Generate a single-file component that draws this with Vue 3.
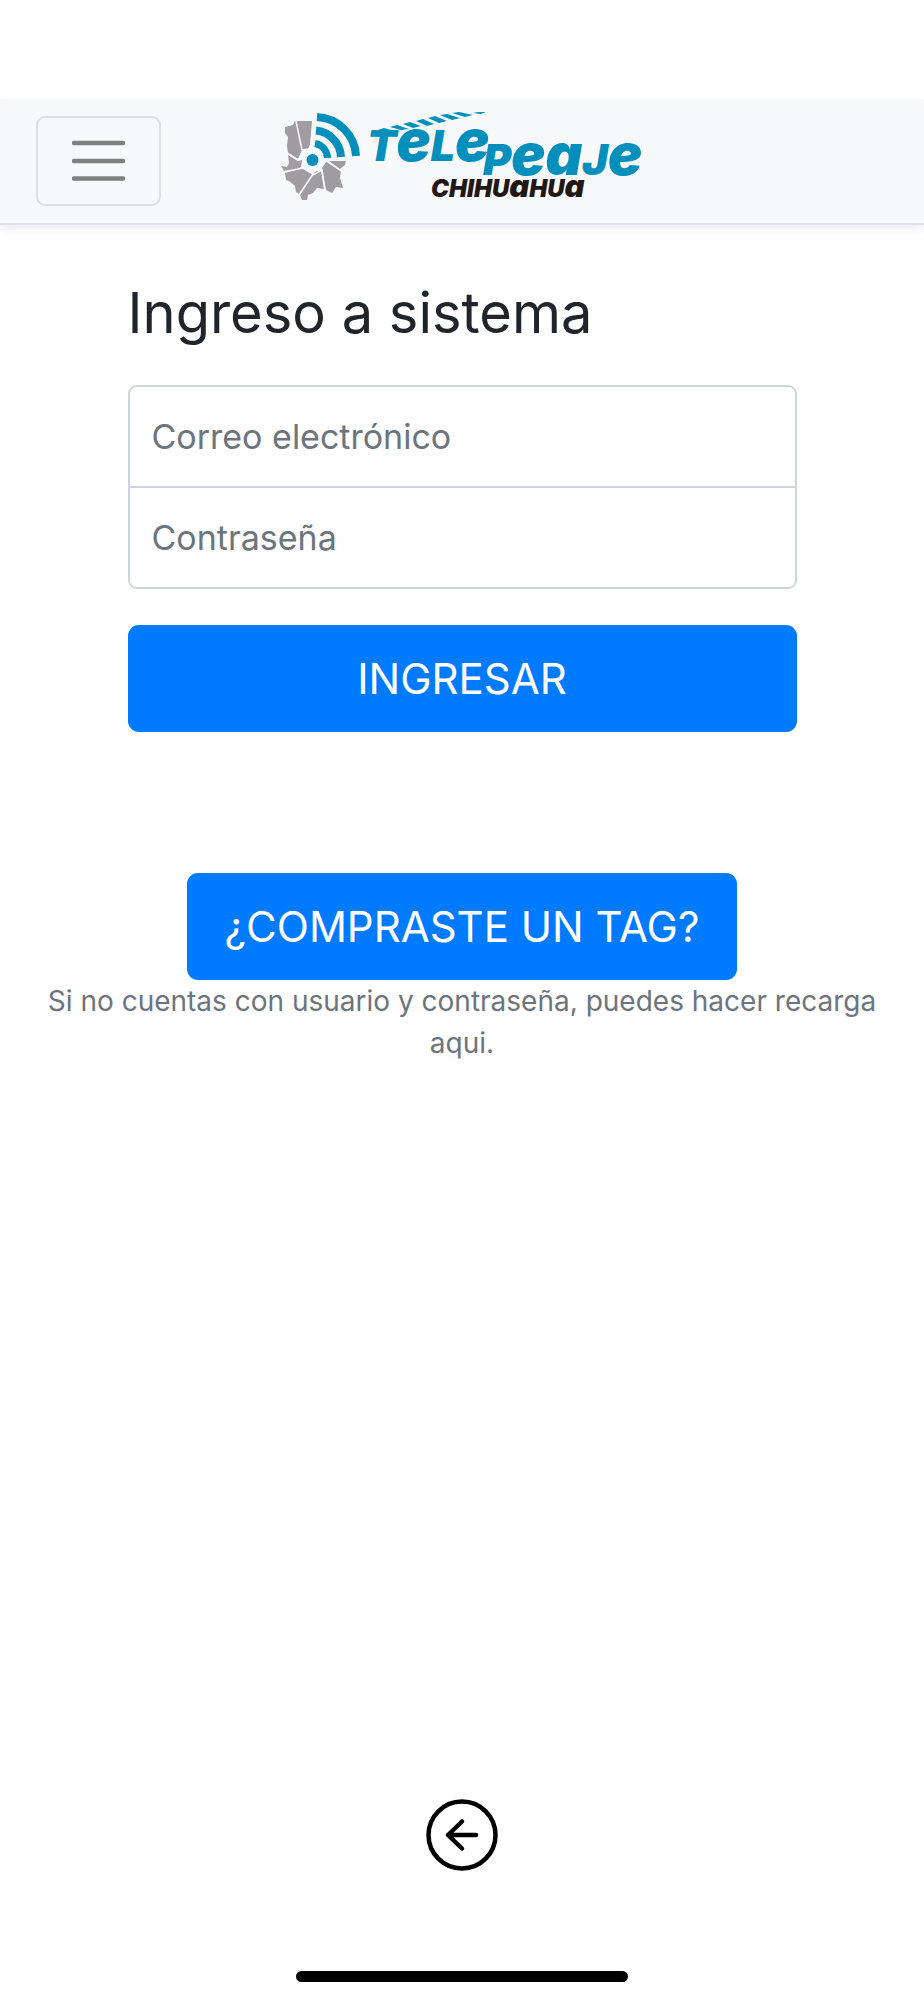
<script setup>
import { ref } from 'vue'

const email = ref('')
const password = ref('')
</script>

<template>
  <div class="screen">
    <header class="navbar">
      <button class="toggler" type="button" aria-label="Menú">
        <svg viewBox="0 0 53 42" width="53" height="42" aria-hidden="true">
          <path d="M2 3H51M2 21H51M2 38.5H51" stroke="#7f8080" stroke-width="4.5" stroke-linecap="round" />
        </svg>
      </button>
      <a class="brand" href="#" aria-label="Telepeaje Chihuahua">
        <svg viewBox="280 116 366 90" width="366" height="90">
          <g fill="#9f9ca2">
            <path d="M286 127L294 125L296 121L299 122L303 150L299 159L289 153L288 146L289 137L286 133Z" />
            <path d="M298 121L313 121L311 144L309 149L303 150Z" />
            <path d="M289 155L299 161L303 160L302 167L298 170L285 171L282 166L288 167L290 163Z" />
            <path d="M286 173L304 168L314 174L300 194L297 192L296 186L290 181L287 180Z" />
            <path d="M314 175L317 171L322 171L325 189L318 188L314 193L309 195L308 200L303 200L301 195Z" />
            <path d="M323 168L328 161L342 171L341 178L344 188L337 187L333 193L327 190Z" />
            <path d="M330 161L347 161L346 165L341 169Z" />
          </g>
          <g fill="none" stroke="#f8f9fa" stroke-width="1.5">
            <path d="M297 121L303 150L310 149M288 153L299 160L305 156M284 172L304 168L314 174L300 195M314 175L323 170L326 190M326 160L342 171" />
          </g>
          <circle cx="313.5" cy="160" r="8" fill="#f8f9fa" />
          <circle cx="313.5" cy="160" r="6" fill="#028fbb" />
          <g fill="none" stroke="#028fbb">
            <path d="M316 143.5A15 15 0 0 1 328.5 158" stroke-width="7" />
            <path d="M317 130.5A28 28 0 0 1 342 157" stroke-width="8" />
            <path d="M318 117A41 41 0 0 1 357 156" stroke-width="8" />
          </g>
          <g fill="#028fbb">
            <path d="M379 130L385 128L399 132L386 132Z" />
            <path d="M391 127L398 125L410 129L402 130Z" />
            <path d="M404 124L411 122L422 126L414 128Z" />
            <path d="M417 121L424 119L435 124L428 126Z" />
            <path d="M429 118L436 116L448 121L440 123Z" />
            <path d="M441 115L448 114L461 118L453 120Z" />
            <path d="M453 113L460 112L474 115L466 117Z" />
            <path d="M474 113L479 112L487 112L482 114Z" />
          </g>
          <g class="wordmark" fill="#028fbb">
            <text x="368" y="161">T<tspan class="round">e</tspan>L<tspan class="round">e</tspan></text>
            <text x="484" y="175">P<tspan class="round">ea</tspan>J<tspan class="round">e</tspan></text>
          </g>
          <text class="place" x="432" y="197" fill="#211714">CHIHU<tspan class="round">a</tspan>HU<tspan class="round">a</tspan></text>
        </svg>
      </a>
    </header>

    <main class="content">
      <form class="login" @submit.prevent>
        <h1>Ingreso a sistema</h1>
        <div class="fields">
          <input v-model="email" type="email" placeholder="Correo electrónico" aria-label="Correo electrónico" />
          <input v-model="password" type="password" placeholder="Contraseña" aria-label="Contraseña" />
        </div>
        <button class="btn" type="submit">INGRESAR</button>
      </form>

      <section class="recharge">
        <button class="btn" type="button">¿COMPRASTE UN TAG?</button>
        <p>Si no cuentas con usuario y contraseña, puedes hacer recarga aqui.</p>
      </section>
    </main>

    <footer class="footer">
      <button class="back" type="button" aria-label="Regresar">
        <svg viewBox="0 0 72 72" width="72" height="72" fill="none" stroke="#000" stroke-width="4.5" aria-hidden="true">
          <circle cx="36" cy="36" r="33.5" />
          <path d="M50 36H22M36 22.5L22 36L36 49.5" stroke-linecap="round" stroke-linejoin="round" />
        </svg>
      </button>
      <div class="home-bar"></div>
    </footer>
  </div>
</template>

<style>
body {
  margin: 0;
  background: #fff;
}
</style>

<style scoped>
.screen {
  box-sizing: border-box;
  min-height: 100vh;
  padding-top: 99px;
  display: flex;
  flex-direction: column;
  font-family: Inter, "Liberation Sans", sans-serif;
  color: #212529;
}

button {
  font-family: inherit;
  cursor: pointer;
}

.navbar {
  display: grid;
  grid-template-columns: 1fr auto 1fr;
  align-items: center;
  padding: 17px 36px;
  background: #f8f9fa;
  border-bottom: 2px solid #dee2e6;
  box-shadow: 0 4px 9px rgba(0, 0, 0, 0.08);
}

.toggler {
  justify-self: start;
  display: flex;
  padding: 22px 34px;
  background: none;
  border: 2px solid rgba(0, 0, 0, 0.1);
  border-radius: 9px;
}

.brand,
.brand svg {
  display: block;
  overflow: visible;
}

.wordmark,
.place {
  font-family: Inter, sans-serif;
  font-weight: 900;
  font-style: italic;
}

.wordmark {
  font-size: 43px;
}

.wordmark .round {
  font-size: 57px;
}

.place {
  font-size: 24px;
}

.place .round {
  font-size: 31px;
}

.content {
  display: flex;
  flex-direction: column;
  align-items: center;
}

.login {
  box-sizing: border-box;
  width: 100%;
  max-width: 669px;
  padding-top: 52px;
}

h1 {
  margin: 0 0 35px;
  font-size: 56px;
  line-height: 73px;
  font-weight: 400;
}

.fields {
  border: 2px solid #ced4da;
  border-radius: 9px;
  overflow: hidden;
}

.fields input {
  display: block;
  box-sizing: border-box;
  width: 100%;
  height: 99px;
  padding: 0 22px;
  border: 0;
  background: #fff;
  font: 400 34px Inter, "Liberation Sans", sans-serif;
  color: #495057;
}

.fields input + input {
  border-top: 2px solid #ced4da;
  height: 101px;
}

.fields input::placeholder {
  color: #6c757d;
  opacity: 1;
}

.btn {
  padding: 26px 38px;
  border: 0;
  border-radius: 11px;
  background: #007bff;
  color: #fff;
  font-size: 42px;
  line-height: 55px;
}

.login .btn {
  width: 100%;
  margin-top: 36px;
}

.recharge {
  padding: 141px 36px 0;
  text-align: center;
}

.recharge p {
  margin: 0;
  font-size: 28px;
  line-height: 42px;
  color: #6c757d;
}

.footer {
  margin-top: auto;
  padding-bottom: 18px;
  display: flex;
  flex-direction: column;
  align-items: center;
  gap: 100px;
}

.back {
  display: flex;
  padding: 0;
  border: 0;
  background: none;
}

.home-bar {
  width: 36%;
  height: 11px;
  border-radius: 6px;
  background: #000;
}
</style>
